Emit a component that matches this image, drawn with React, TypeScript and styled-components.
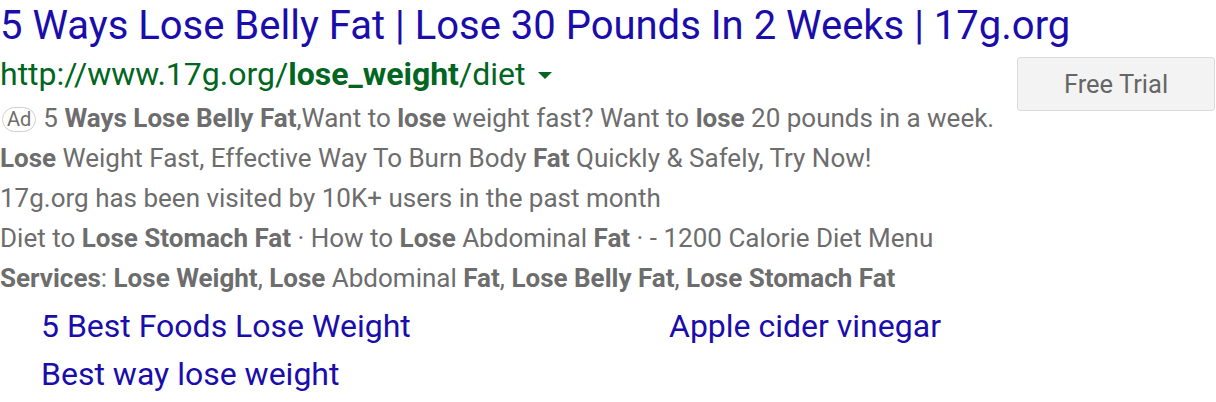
import React from "react";
import styled, { createGlobalStyle } from "styled-components";

const GlobalStyle = createGlobalStyle`
  html, body { margin: 0; padding: 0; background: #fff; }
  body { font-family: Roboto, "Noto Sans", Arial, sans-serif; }
`;

const Result = styled.div`
  width: 1216px;
  height: 402px;
  overflow: hidden;
  box-sizing: border-box;
`;

const Title = styled.a`
  display: block;
  font-size: 40px;
  line-height: 52px;
  color: #1a0dab;
  text-decoration: none;
  white-space: nowrap;
`;

const Body = styled.div`
  display: flex;
  align-items: flex-start;
  justify-content: space-between;
`;

const Main = styled.div`
  display: flex;
  flex-direction: column;
`;

const UrlRow = styled.div`
  display: flex;
  align-items: center;
  font-size: 32px;
  line-height: 44px;
  margin-bottom: 2px;
  color: #006621;
  white-space: nowrap;
  b { font-weight: 700; }
`;

const Caret = styled.span`
  display: inline-block;
  width: 0;
  height: 0;
  margin-left: 13px;
  margin-top: 2px;
  border-left: 7px solid transparent;
  border-right: 7px solid transparent;
  border-top: 7px solid #006621;
`;

const Line = styled.div`
  font-size: 26px;
  line-height: 40px;
  color: #6d6d6d;
  white-space: nowrap;
  b { font-weight: 700; }
`;

const AdBadge = styled.span`
  display: inline-block;
  box-sizing: border-box;
  height: 25px;
  line-height: 23px;
  padding: 0 4px;
  margin-right: 7px;
  margin-left: 2px;
  border: 1px solid #cfcfcf;
  border-radius: 13px;
  font-size: 20px;
  color: #6d6d6d;
  vertical-align: 1px;
`;

const TrialButton = styled.button`
  box-sizing: border-box;
  width: 198px;
  height: 54px;
  margin-top: 5px;
  margin-right: 1px;
  background: #f3f3f3;
  border: 1.5px solid #dcdcdc;
  border-radius: 3px;
  font-family: Roboto, Arial, sans-serif;
  font-size: 25.5px;
  color: #666;
  cursor: pointer;
`;

const Sitelinks = styled.div`
  display: grid;
  grid-template-columns: 628px 1fr;
  padding-left: 41px;
  margin-top: 4px;
`;

const Sitelink = styled.a`
  font-size: 32px;
  line-height: 48px;
  color: #1a0dab;
  text-decoration: none;
  white-space: nowrap;
`;

export default function App() {
  return (
    <>
      <GlobalStyle />
      <Result>
        <Title href="#">5 Ways Lose Belly Fat | Lose 30 Pounds In 2 Weeks | 17g.org</Title>
        <Body>
          <Main>
            <UrlRow>
              <span>
                http://www.17g.org/<b>lose_weight</b>/diet
              </span>
              <Caret />
            </UrlRow>
            <Line>
              <AdBadge>Ad</AdBadge>5 <b>Ways Lose Belly Fat</b>,Want to <b>lose</b> weight fast? Want to{" "}
              <b>lose</b> 20 pounds in a week.
            </Line>
            <Line>
              <b>Lose</b> Weight Fast, Effective Way To Burn Body <b>Fat</b> Quickly &amp; Safely, Try Now!
            </Line>
            <Line>17g.org has been visited by 10K+ users in the past month</Line>
            <Line>
              Diet to <b>Lose Stomach Fat</b> · How to <b>Lose</b> Abdominal <b>Fat</b> · - 1200 Calorie Diet Menu
            </Line>
            <Line>
              <b>Services</b>: <b>Lose Weight</b>, <b>Lose</b> Abdominal <b>Fat</b>, <b>Lose Belly Fat</b>,{" "}
              <b>Lose Stomach Fat</b>
            </Line>
          </Main>
          <TrialButton>Free Trial</TrialButton>
        </Body>
        <Sitelinks>
          <Sitelink href="#">5 Best Foods Lose Weight</Sitelink>
          <Sitelink href="#">Apple cider vinegar</Sitelink>
          <Sitelink href="#">Best way lose weight</Sitelink>
        </Sitelinks>
      </Result>
    </>
  );
}
